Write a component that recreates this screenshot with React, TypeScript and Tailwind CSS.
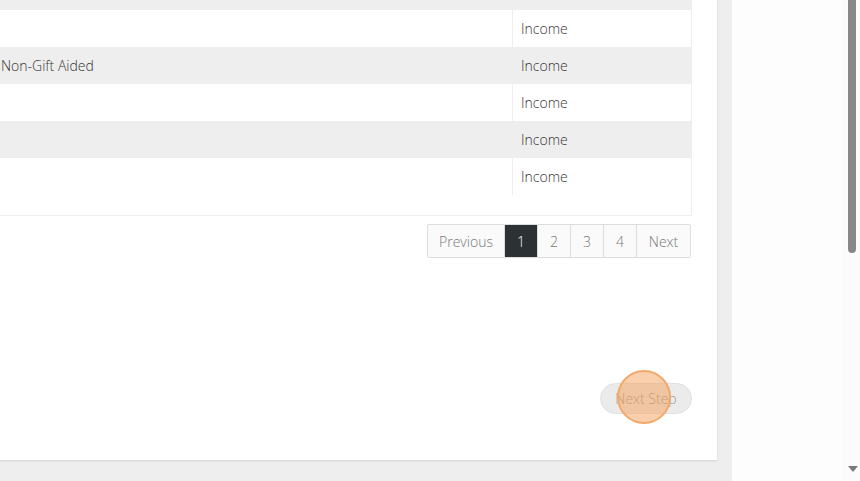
import React from 'react';

const rows = [
  { name: '', type: '', striped: true },
  { name: '', type: 'Income', striped: false },
  { name: 'Non-Gift Aided', type: 'Income', striped: true },
  { name: '', type: 'Income', striped: false },
  { name: '', type: 'Income', striped: true },
  { name: '', type: 'Income', striped: false },
];

const pages = ['1', '2', '3', '4'];

export default function App() {
  return (
    <div
      className="flex w-[860px] h-[481px] overflow-hidden bg-[#fdfdfd] text-[#333]"
      style={{ fontFamily: '"Open Sans", "Noto Sans", sans-serif' }}
    >
      <div className="w-[732px] h-full bg-[#efeeee] shrink-0">
        <div className="relative w-[717px] h-[460px] bg-white shadow-[0_1px_2px_rgba(0,0,0,0.12)] flex flex-col">
          {/* table */}
          <div className="w-[692px] mt-[-27px] pb-[20px] border-r border-b border-[#eeeeee]">
            {rows.map((r, i) => (
              <div
                key={i}
                className={'flex h-[37px] items-center text-[14px] font-light ' + (r.striped ? 'bg-[#efeeee]' : 'bg-white')}
              >
                <div className="w-[512px] pl-[1px] pt-[1px] leading-[36px]">{r.name}</div>
                <div className="flex-1 h-full border-l border-[#eeeeee] pl-[8px] pt-[1px] leading-[36px]">{r.type}</div>
              </div>
            ))}
          </div>

          {/* pagination */}
          <div className="flex justify-end w-[691px] mt-[8px]">
            <div className="flex h-[34px] text-[14px] font-light text-[#777]">
              <div className="w-[78px] flex items-center justify-center border border-[#dddddd] bg-[#fafafa] rounded-l-[2px]">
                Previous
              </div>
              {pages.map(p => (
                <div
                  key={p}
                  className={
                    'w-[33px] flex items-center justify-center border-y border-r border-[#dddddd] ' +
                    (p === '1' ? 'bg-[#2c3134] text-white border-[#2c3134]' : 'bg-[#fafafa]')
                  }
                >
                  {p}
                </div>
              ))}
              <div className="w-[54px] flex items-center justify-center border-y border-r border-[#dddddd] bg-[#fafafa] rounded-r-[2px]">
                Next
              </div>
            </div>
          </div>

          {/* next step */}
          <div className="flex justify-end w-[692px] mt-[125px]">
            <div className="relative">
              <button className="w-[92px] h-[31px] rounded-full bg-[#ebebeb] border border-[#e0e0e0] text-[14px] font-light text-[#999999]">
                Next Step
              </button>
              <div className="absolute left-[17px] top-[-13px] w-[54px] h-[54px] rounded-full bg-[rgba(244,160,90,0.5)] border-2 border-[#f2a868]" />
            </div>
          </div>
        </div>
      </div>

      <div className="flex-1" />

      {/* scrollbar */}
      <div className="relative w-[17px] h-full bg-[#fbfbfb]">
        <div className="absolute left-[5px] top-0 w-[8px] h-[253px] rounded-b-full bg-[#888888]" />
        <div className="absolute left-[5px] top-[466px] w-0 h-0 border-l-[5px] border-r-[5px] border-t-[6px] border-l-transparent border-r-transparent border-t-[#7a7a7a]" />
      </div>
    </div>
  );
}
